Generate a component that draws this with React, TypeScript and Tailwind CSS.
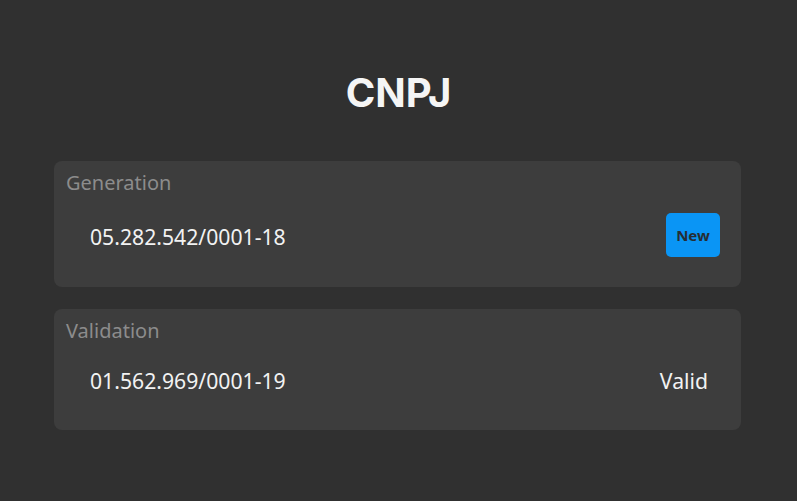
import React from 'react';

const font = { fontFamily: '"Noto Sans", "Open Sans", sans-serif' };

interface CardProps {
  label: string;
  value: string;
  children: React.ReactNode;
  className?: string;
  rowClassName?: string;
}

const Card: React.FC<CardProps> = ({ label, value, children, className, rowClassName }) => (
  <div className={`rounded-lg bg-[#3d3d3d] px-3 pt-2 ${className ?? ''}`}>
    <div className="text-[20px] leading-7 text-[#8c8c8c]">{label}</div>
    <div className={`flex h-11 items-center justify-between pl-6 ${rowClassName ?? 'mt-4'}`}>
      <span className="pt-1 text-[21.2px] text-[#f2f2f2]">{value}</span>
      {children}
    </div>
  </div>
);

export default function App() {
  return (
    <div style={font} className="flex h-[501px] w-full flex-col bg-[#303030] px-[54px] pt-[69px]">
      <h1 className="text-center font-['Inter',sans-serif] text-[40px] font-bold leading-[48px] text-[#f5f5f5]">CNPJ</h1>
      <div className="mt-11 flex flex-col gap-[22px] pr-[2px]">
        <Card label="Generation" value="05.282.542/0001-18" className="h-[126px]">
          <button className="mr-[9px] h-11 w-[54px] rounded-[5px] bg-[#0a95f5] text-[15px] font-bold text-[#262d33]">
            New
          </button>
        </Card>
        <Card label="Validation" value="01.562.969/0001-19" className="h-[121px]" rowClassName="mt-3">
          <span className="mr-[21px] pt-1 text-[21.2px] text-[#f2f2f2]">Valid</span>
        </Card>
      </div>
    </div>
  );
}
